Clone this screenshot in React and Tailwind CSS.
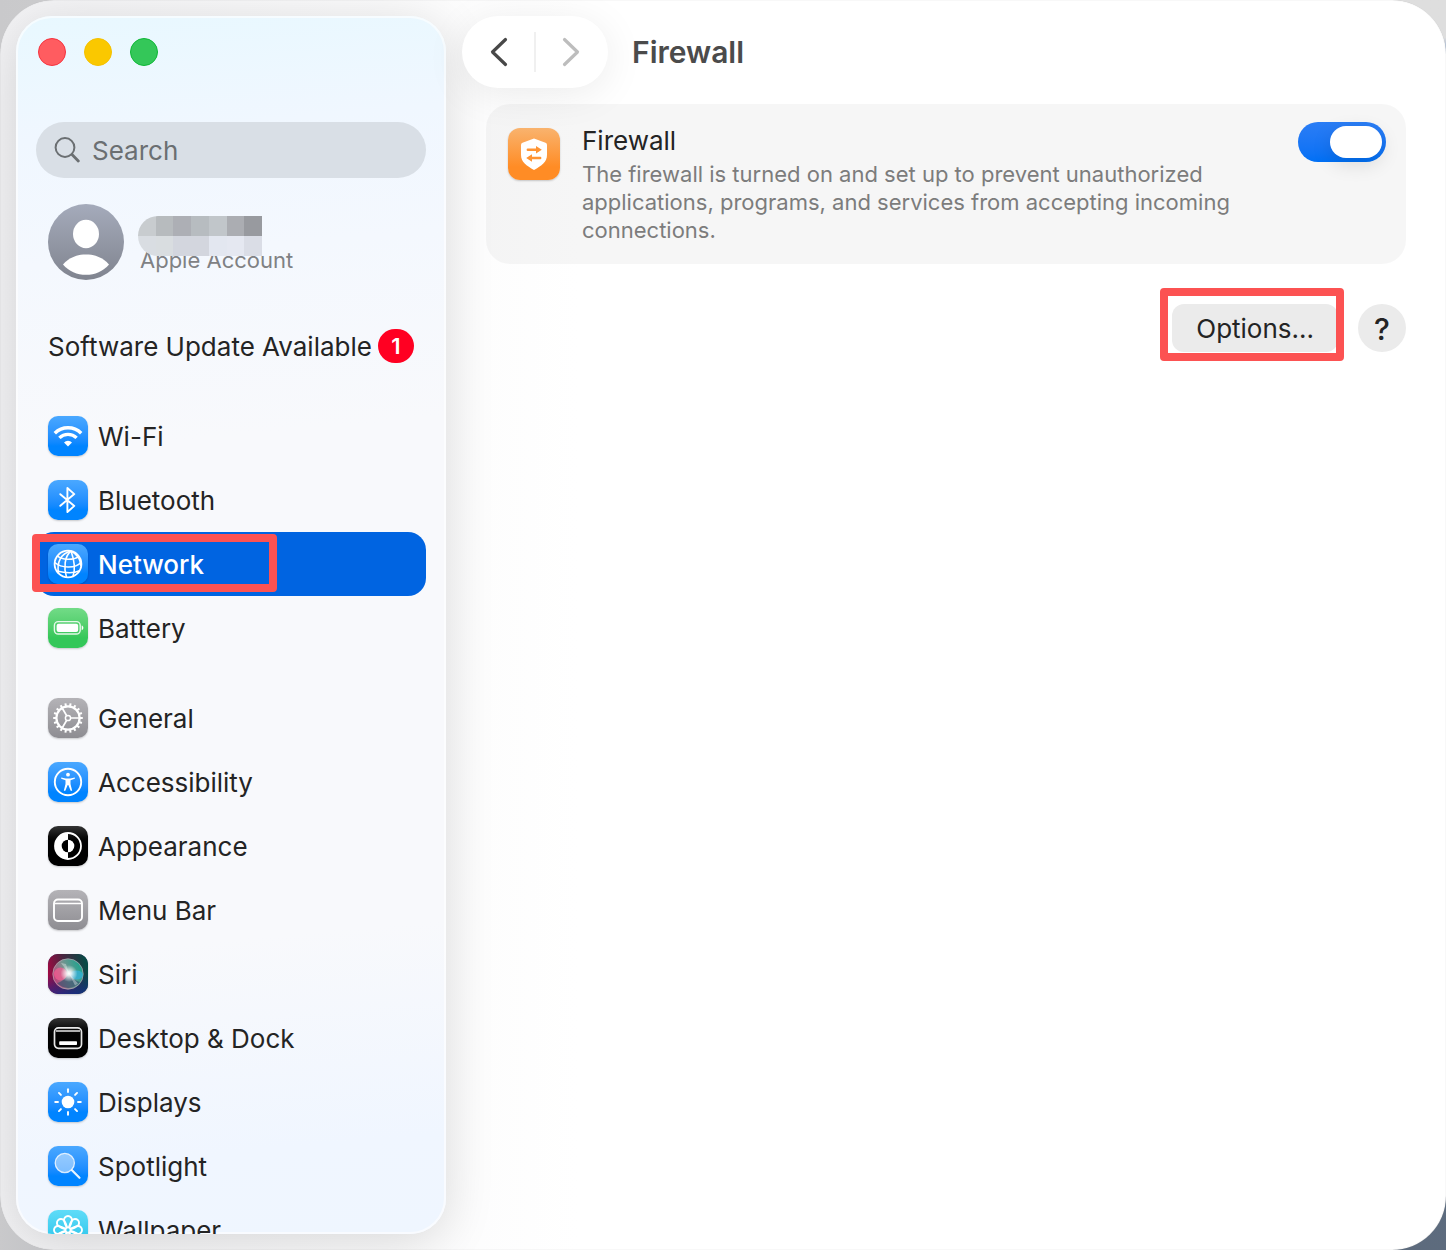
import { useState } from 'react'

const BLUE = 'bg-linear-to-b from-[#4aa8ff] to-[#0084ff] to-75%'
const GRAY = 'bg-linear-to-b from-[#b4b3b7] to-[#8e8d92]'
const BLACK = 'bg-linear-to-b from-[#353535] to-black to-50%'

const PETALS = [0, 45, 90, 135, 180, 225, 270, 315]
const TEETH = [0, 20, 40, 60, 80, 100, 120, 140, 160, 180, 200, 220, 240, 260, 280, 300, 320, 340]

const WifiIcon = () => (
    <g>
        <g fill="none" stroke="white" strokeWidth="3.4">
            <path d="M6.8 17.2a18.6 18.6 0 0 1 26.4 0" />
            <path d="M11.4 21.9a12.2 12.2 0 0 1 17.2 0" />
        </g>
        <path d="M20 30.4l-4-4a5.8 5.8 0 0 1 8 0z" fill="white" />
    </g>
)

const BluetoothIcon = () => (
    <path d="M12.3 14.2L26.3 25.9L19.4 32V8L26.3 14.1L12.3 25.8" fill="none" stroke="white" strokeWidth="1.9" strokeLinejoin="round" strokeLinecap="round" />
)

const NetworkIcon = () => (
    <g fill="none" stroke="white" strokeWidth="1.6">
        <circle cx="20" cy="20" r="13.4" strokeWidth="1.8" />
        <path d="M23 7C16.5 12 15.5 24 18.5 33.300" />
        <path d="M23 7C25.500 14 28 24 25 32.300" />
        <path d="M23 7C13 9.500 8.500 18 10.500 29.400" />
        <path d="M23 7C29 10 32.500 15 33 22" />
        <path d="M9.500 12.200C14 16 25 16.500 31 12.600" />
        <path d="M6.800 18.500C13 24 27 25 33 18.500" />
        <path d="M8.800 27C15 28.500 24 30.500 31.500 26.600" />
    </g>
)

const BatteryIcon = () => (
    <g>
        <rect x="6.400" y="13.600" width="25.800" height="12.400" rx="3.800" fill="none" stroke="white" strokeOpacity="0.850" strokeWidth="1.400" />
        <rect x="8.600" y="15.700" width="21.600" height="8.200" rx="2" fill="white" />
        <path d="M33.700 17.500c2.200.700 2.200 4 0 4.700z" fill="white" />
    </g>
)

const GearIcon = () => (
    <g fill="none" stroke="white">
        <circle cx="20" cy="20" r="11.600" strokeWidth="2.200" />
        {TEETH.map((a) => (
            <path key={a} d="M20 8.500V5.200" strokeWidth="2" transform={`rotate(${a + 10} 20 20)`} />
        ))}
        <circle cx="20" cy="20" r="2.600" strokeWidth="1.500" />
        <path d="M22.600 20H31M18.700 17.700L14.300 10.200M18.700 22.300L14.300 29.800" strokeWidth="1.700" />
    </g>
)

const AccessibilityIcon = () => (
    <g>
        <circle cx="20" cy="20" r="13.200" fill="none" stroke="white" strokeWidth="1.900" />
        <circle cx="20" cy="12.700" r="1.900" fill="white" />
        <path d="M13.200 15.400l4.600 1h4.400l4.600-1v1.300l-4.300 1.500v3.900l1.700 6.700h-1.500L20.300 23h-.600l-2.400 5.800h-1.500l1.700-6.700v-3.900l-4.300-1.500z" fill="white" />
    </g>
)

const AppearanceIcon = () => (
    <g>
        <circle cx="20" cy="20" r="13" fill="none" stroke="white" strokeWidth="1.800" />
        <path d="M20 7a13 13 0 0 0 0 26z" fill="white" />
        <path d="M20 13.700a6.300 6.300 0 0 0 0 12.600z" fill="black" />
        <path d="M20 13.700a6.300 6.300 0 0 1 0 12.600z" fill="white" />
    </g>
)

const MenuBarIcon = () => (
    <g fill="none" stroke="white">
        <rect x="6" y="9.500" width="28" height="21.500" rx="4" strokeWidth="1.900" />
        <path d="M7 13.500H33" strokeWidth="1.600" />
    </g>
)

const SiriIcon = () => (
    <g>
        <defs>
            <linearGradient id="siri-bg" x1="0" y1="0.600" x2="1" y2="0.400">
                <stop offset="0" stopColor="#a50743" />
                <stop offset="0.450" stopColor="#4a2540" />
                <stop offset="1" stopColor="#064a45" />
            </linearGradient>
            <linearGradient id="siri-orb" x1="0" y1="0.700" x2="1" y2="0.300">
                <stop offset="0" stopColor="#c73a78" />
                <stop offset="0.450" stopColor="#77938f" />
                <stop offset="1" stopColor="#18a58e" />
            </linearGradient>
            <linearGradient id="siri-shade" x1="0" y1="0" x2="0" y2="1">
                <stop offset="0.500" stopColor="#0c2f96" stopOpacity="0" />
                <stop offset="1" stopColor="#0c2f96" />
            </linearGradient>
            <radialGradient id="siri-glow">
                <stop offset="0" stopColor="white" />
                <stop offset="0.250" stopColor="white" stopOpacity="0.850" />
                <stop offset="1" stopColor="white" stopOpacity="0" />
            </radialGradient>
        </defs>
        <rect width="40" height="40" fill="url(#siri-bg)" />
        <rect width="40" height="40" fill="url(#siri-shade)" opacity="0.700" />
        <circle cx="20" cy="20" r="15.200" fill="url(#siri-orb)" stroke="#b9a7b4" strokeOpacity="0.700" />
        <ellipse cx="12.500" cy="20" rx="6.500" ry="6.500" fill="#ff5a94" opacity="0.650" />
        <ellipse cx="28.500" cy="21" rx="6.500" ry="4.500" fill="#35b4e0" opacity="0.700" />
        <path d="M9 29c5-1 9-5 12-9 3 5 7 7 11 8a15 15 0 0 1-23 1z" fill="#35506f" opacity="0.650" />
        <path d="M21 19.500L13 9l5 1zM21 19.500l9 10-3 2z" fill="white" opacity="0.350" />
        <circle cx="21" cy="19.500" r="8.500" fill="url(#siri-glow)" />
    </g>
)

const DockIcon = () => (
    <g>
        <rect x="6.500" y="9.900" width="27" height="20.400" rx="4" fill="none" stroke="white" strokeOpacity="0.900" strokeWidth="1.700" />
        <path d="M8 13H32" stroke="white" strokeOpacity="0.900" strokeWidth="1.300" />
        <rect x="11.200" y="23.200" width="17.800" height="3.800" rx="0.800" fill="white" />
    </g>
)

const DisplaysIcon = () => (
    <g>
        <circle cx="20" cy="20" r="6.300" fill="white" />
        {PETALS.map((a) => (
            <path key={a} d="M20 10V7.200" stroke="white" strokeWidth="1.900" strokeLinecap="round" transform={`rotate(${a} 20 20)`} />
        ))}
    </g>
)

const SpotlightIcon = () => (
    <g>
        <circle cx="16.800" cy="17" r="9.600" fill="white" fillOpacity="0.450" stroke="white" strokeOpacity="0.800" strokeWidth="1.300" />
        <path d="M24 24.200L31.500 31.800" stroke="white" strokeOpacity="0.900" strokeWidth="2.200" strokeLinecap="round" />
    </g>
)

const WallpaperIcon = () => (
    <g fill="none" stroke="white" strokeWidth="1.900">
        {PETALS.map((a) => (
            <path key={a} d="M19 17L17.600 13.200a4 4 0 1 1 4.800 0L21 17" transform={`rotate(${a} 20 20)`} />
        ))}
        <circle cx="20" cy="20" r="2.600" />
    </g>
)

const GROUPS = [
    [
        { label: 'Wi-Fi', icon: WifiIcon, bg: BLUE },
        { label: 'Bluetooth', icon: BluetoothIcon, bg: BLUE },
        { label: 'Network', icon: NetworkIcon, bg: BLUE, marked: true },
        { label: 'Battery', icon: BatteryIcon, bg: 'bg-linear-to-b from-[#72db87] to-[#34c759] to-75%' },
    ],
    [
        { label: 'General', icon: GearIcon, bg: GRAY },
        { label: 'Accessibility', icon: AccessibilityIcon, bg: BLUE },
        { label: 'Appearance', icon: AppearanceIcon, bg: BLACK },
        { label: 'Menu Bar', icon: MenuBarIcon, bg: GRAY },
        { label: 'Siri', icon: SiriIcon, bg: 'bg-[#343064]' },
        { label: 'Desktop & Dock', icon: DockIcon, bg: BLACK },
        { label: 'Displays', icon: DisplaysIcon, bg: BLUE },
        { label: 'Spotlight', icon: SpotlightIcon, bg: BLUE },
        { label: 'Wallpaper', icon: WallpaperIcon, bg: 'bg-linear-to-b from-[#5fdcf8] to-[#00bfe8]' },
    ],
]

// Blurred-out account name
const NAME_BLOCKS = [
    'bg-[#c8cccf]', 'bg-[#b7bbbe]', 'bg-[#adafb5]', 'bg-[#b7bcc0]', 'bg-[#c1c6ca]', 'bg-[#abadb2]', 'bg-[#989a9f]',
    'bg-[#d9dde2]', 'bg-[#d9dde0]', 'bg-[#d3d6de]', 'bg-[#d3d6de]', 'bg-[#e3e7f0]', 'bg-[#e5e8f1]', 'bg-[#dadde6]',
]

function NavItem({ item, selected, onSelect }) {
    const Icon = item.icon
    return (
        <li className="relative">
            <a
                href={`#${item.label}`}
                onClick={() => onSelect(item.label)}
                className={`flex h-16 items-center gap-2.5 rounded-[18px] px-3 ${selected ? 'bg-[#0064e1] font-medium text-white' : ''}`}
            >
                <span className={`size-10 shrink-0 overflow-hidden rounded-[10px] shadow-[0_1px_2px_rgba(0,0,0,0.2)] ${item.bg}`}>
                    <svg viewBox="0 0 40 40" className="size-10" aria-hidden="true">
                        <Icon />
                    </svg>
                </span>
                <span className="pt-0.5">{item.label}</span>
            </a>
            {item.marked && (
                <span className="pointer-events-none absolute -left-1 top-0.5 h-[58px] w-[245px] rounded-sm border-8 border-[#fc5252]" />
            )}
        </li>
    )
}

function Sidebar() {
    const [selected, setSelected] = useState('Network')

    return (
        <aside className="flex w-[430px] shrink-0 flex-col overflow-hidden rounded-[36px] bg-[linear-gradient(175deg,#e8f8ff_0%,#f0f7ff_10%,#f4f8fe_20%,#f8f9fc_35%,#f8f9fc_75%,#f0f6ff_92%,#eff6ff_100%)] px-5 pt-[22px] shadow-[inset_0_0_0_2px_rgba(255,255,255,0.6),0_8px_50px_rgba(0,0,0,0.14)]">
            <div className="flex shrink-0 gap-[18px] px-0.5">
                <button aria-label="Close" className="size-7 rounded-full border border-[#f5333e] bg-[#ff5c60]" />
                <button aria-label="Minimize" className="size-7 rounded-full border border-[#f4c000] bg-[#fac800]" />
                <button aria-label="Zoom" className="size-7 rounded-full border border-[#0fb736] bg-[#34c759]" />
            </div>

            <label className="mt-14 flex h-14 shrink-0 items-center gap-3 rounded-full bg-[#d9dfe6] px-[18px] text-[#6b6f72]">
                <svg viewBox="0 0 26 26" className="size-[26px] shrink-0" fill="none" stroke="currentColor" strokeLinecap="round" aria-hidden="true">
                    <circle cx="11" cy="10.500" r="9.400" strokeWidth="2" />
                    <path d="M18 17.500L24.300 24" strokeWidth="2.800" />
                </svg>
                <input type="search" aria-label="Search" placeholder="Search" className="min-w-0 flex-1 bg-transparent pt-0.5 outline-none placeholder:text-[#6b6f72]" />
            </label>

            <a href="#account" className="mt-[26px] flex shrink-0 items-center gap-3.5 px-3">
                <svg viewBox="0 0 76 76" className="size-[76px]" aria-hidden="true">
                    <defs>
                        <linearGradient id="avatar" x1="0" y1="0" x2="0" y2="1">
                            <stop offset="0" stopColor="#a5abbb" />
                            <stop offset="1" stopColor="#80848f" />
                        </linearGradient>
                    </defs>
                    <circle cx="38" cy="38" r="38" fill="url(#avatar)" />
                    <ellipse cx="38" cy="30" rx="13" ry="14.200" fill="white" />
                    <path d="M15 60.500C21 53.500 29 50.500 38 50.500s17 3 23 10C55 67.500 47 70.800 38 70.800S21 67.500 15 60.500z" fill="white" />
                </svg>
                <span className="flex flex-col pt-1.5">
                    <span className="relative z-10 grid h-10 w-[124px] grid-cols-7 grid-rows-2 overflow-hidden rounded-l-full">
                        {NAME_BLOCKS.map((color, i) => (
                            <span key={i} className={color} />
                        ))}
                    </span>
                    <span className="-mt-2.5 px-0.5 text-[22px] leading-7 text-[#7f8184]">Apple Account</span>
                </span>
            </a>

            <a href="#update" className="mt-12 flex h-9 shrink-0 items-center justify-between px-3">
                <span className="pt-0.5">Software Update Available</span>
                <span className="flex h-[34px] w-9 items-center justify-center rounded-full bg-[#ff0022] text-[22px] font-semibold text-white">1</span>
            </a>

            <nav className="-mx-1 mt-10 flex min-h-0 flex-1 flex-col gap-[26px] overflow-hidden px-1">
                {GROUPS.map((group, i) => (
                    <ul key={i}>
                        {group.map((item) => (
                            <NavItem key={item.label} item={item} selected={selected === item.label} onSelect={setSelected} />
                        ))}
                    </ul>
                ))}
            </nav>
        </aside>
    )
}

function FirewallCard() {
    const [enabled, setEnabled] = useState(true)

    return (
        <section className="flex items-start gap-[22px] rounded-3xl bg-black/[0.035] pb-5 pl-[22px] pr-5 pt-[18px]">
            <svg viewBox="0 0 52 52" className="mt-1.5 size-[52px] shrink-0 rounded-xl shadow-[0_1px_2px_rgba(0,0,0,0.2)]" aria-hidden="true">
                <defs>
                    <linearGradient id="firewall" x1="0" y1="0" x2="0" y2="1">
                        <stop offset="0" stopColor="#f9b36e" />
                        <stop offset="0.750" stopColor="#ff8c25" />
                    </linearGradient>
                </defs>
                <rect width="52" height="52" fill="url(#firewall)" />
                <path d="M26 10.500l11.500 4.200q1.500.600 1.500 2.200V27c0 7-5.500 10.800-13 15-7.500-4.200-13-8-13-15V16.900q0-1.600 1.500-2.200z" fill="white" />
                <g fill="none" stroke="#ff9433" strokeWidth="2.400" strokeLinecap="round">
                    <path d="M19.800 21.800H29M23 30H32.200" />
                </g>
                <path d="M28 18l5.800 3.800-5.800 3.800zM24 26.200L18.200 30l5.800 3.800z" fill="#ff9433" />
            </svg>
            <div className="min-w-0 flex-1">
                <h2 id="firewall-label" className="leading-[38px]">Firewall</h2>
                <p className="max-w-[670px] text-[22px] leading-7 text-[#7c7c7c]">
                    The firewall is turned on and set up to prevent unauthorized applications, programs, and services from accepting incoming connections.
                </p>
            </div>
            <label className="relative h-10 w-[88px] shrink-0 cursor-pointer">
                <input
                    type="checkbox"
                    role="switch"
                    aria-labelledby="firewall-label"
                    checked={enabled}
                    onChange={(e) => setEnabled(e.target.checked)}
                    className="peer sr-only"
                />
                <span className="block h-10 rounded-full bg-[#c7c7cc] peer-checked:bg-linear-to-b peer-checked:from-[#2a7df5] peer-checked:to-[#0070f5]" />
                <span className="absolute left-1 top-1 h-8 w-[52px] rounded-full bg-white shadow-[0_6px_20px_rgba(0,0,0,0.12)] peer-checked:left-8" />
            </label>
        </section>
    )
}

export default function App() {
    return (
        <div className="h-screen bg-linear-to-b from-[#dedede] from-3% via-[#4b76b5] via-5% to-[#5d6b7d]">
            <div className="h-full bg-linear-to-r from-[#c9c9cb] via-transparent via-50% to-transparent">
                <div className="flex h-full gap-4 overflow-hidden rounded-[54px] bg-linear-to-r from-[#f3f3f5] to-white to-40% p-4 font-[Inter,sans-serif] text-[26px] leading-8 text-[#242424] shadow-[inset_0_0_1px_rgba(0,0,0,0.3)]">
                    <Sidebar />

                    <main className="flex min-w-0 flex-1 flex-col">
                        <header className="flex items-center gap-6">
                            <div className="flex h-[72px] w-[146px] items-center rounded-full bg-white shadow-[0_6px_40px_rgba(0,0,0,0.08)]">
                                <button aria-label="Back" className="flex h-10 flex-1 items-center justify-center border-r-2 border-[#f0f0f0]">
                                    <svg viewBox="0 0 20 32" className="h-8 w-5" fill="none" stroke="#484848" strokeWidth="3.2" strokeLinecap="round" strokeLinejoin="round">
                                        <path d="M17.500 3.500L4.500 16L17.500 28.500" />
                                    </svg>
                                </button>
                                <button aria-label="Forward" disabled className="flex h-10 flex-1 items-center justify-center">
                                    <svg viewBox="0 0 20 32" className="h-8 w-5" fill="none" stroke="#bdbdbd" strokeWidth="3.2" strokeLinecap="round" strokeLinejoin="round">
                                        <path d="M2.500 3.500L15.500 16L2.500 28.500" />
                                    </svg>
                                </button>
                            </div>
                            <h1 className="text-[30px] font-semibold leading-9 text-[#4b4b4b]">Firewall</h1>
                        </header>

                        <div className="mx-6 mt-4 flex flex-col gap-10">
                            <FirewallCard />
                            <div className="flex items-center justify-end gap-5">
                                <div className="relative">
                                    <button className="h-12 rounded-xl bg-[#ebebeb] px-6 pt-0.5">Options...</button>
                                    <span className="pointer-events-none absolute -bottom-[9px] -left-3 -right-1.5 -top-4 rounded-sm border-8 border-[#fc5252]" />
                                </div>
                                <button aria-label="Help" className="size-12 rounded-full bg-[#ebebeb] pt-0.5 text-[30px] font-medium">?</button>
                            </div>
                        </div>
                    </main>
                </div>
            </div>
        </div>
    )
}
